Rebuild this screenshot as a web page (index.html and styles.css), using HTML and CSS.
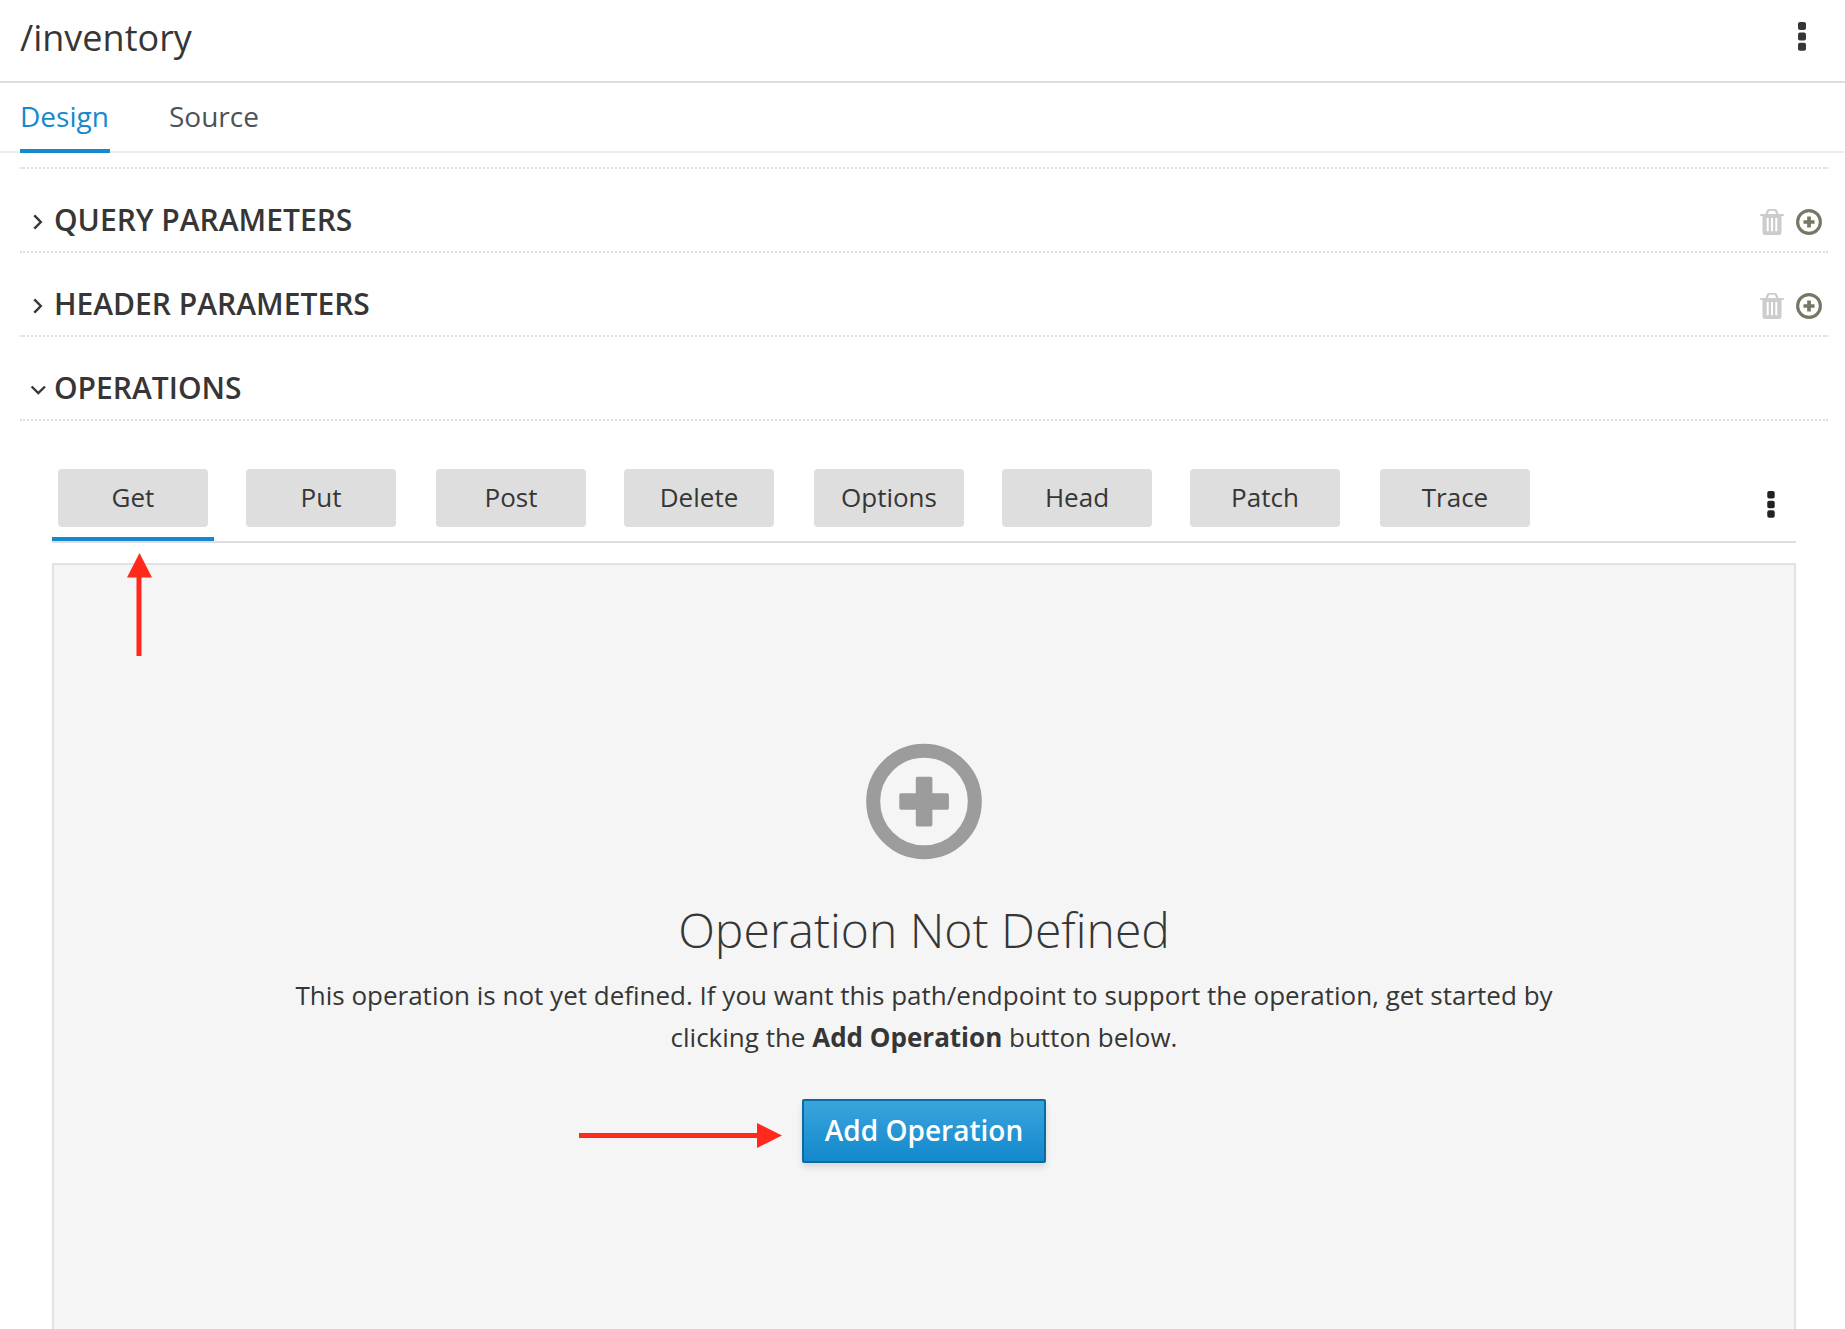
FILE: index.html
```html
<!DOCTYPE html>
<html lang="en">
<head>
<meta charset="utf-8">
<title>/inventory</title>
<link rel="stylesheet" href="styles.css">
</head>
<body>
<svg class="defs" width="0" height="0" aria-hidden="true">
  <symbol id="trash" viewBox="0 0 24 26">
    <path fill-rule="evenodd" d="M9 0h6q1.500 0 2 1.300L18.500 5H23q1 0 1 1t-1 1h-1.500v16q0 3-2.500 3H5q-2.500 0-2.500-3V7H1Q0 7 0 6t1-1h4.500L7 1.300Q7.500 0 9 0zM9.300 1.700L7.700 5h8.600l-1.600-3.300zM6.700 9v13.300h2V9zM11 9v13.300h2V9zM15.300 9v13.300h2V9z"/>
  </symbol>
  <symbol id="add" viewBox="0 0 116 116">
    <circle cx="58" cy="58" r="50.800" fill="none" stroke="currentColor" stroke-width="14"/>
    <path d="M51.500 33.300h13.200q1.700 0 1.700 1.700v14.700H81.200q1.700 0 1.700 1.700v13.200q0 1.700-1.700 1.700H66.400V81.200q0 1.700-1.700 1.700H51.500q-1.700 0-1.700-1.700V66.300H35q-1.700 0-1.700-1.700V51.400q0-1.700 1.700-1.700h14.800V35q0-1.700 1.700-1.700z"/>
  </symbol>
  <symbol id="kebab" viewBox="0 0 8 29">
    <rect width="8" height="8" rx="2"/><rect y="10.400" width="8" height="8" rx="2"/><rect y="20.700" width="8" height="8" rx="2"/>
  </symbol>
</svg>

<header class="page-header">
  <h1 class="path-name">/inventory</h1>
  <svg class="kebab"><use href="#kebab"/></svg>
</header>

<nav class="tabs">
  <a class="tab tab-active">Design</a>
  <a class="tab">Source</a>
</nav>

<main class="editor">
  <section class="section-row">
    <svg class="chevron" viewBox="0 0 16 16"><path d="M4.300 1.300L10.800 8l-6.500 6.700"/></svg>
    <h2 class="section-title">QUERY PARAMETERS</h2>
    <svg class="trash"><use href="#trash"/></svg>
    <svg class="add"><use href="#add"/></svg>
  </section>
  <section class="section-row">
    <svg class="chevron" viewBox="0 0 16 16"><path d="M4.300 1.300L10.800 8l-6.500 6.700"/></svg>
    <h2 class="section-title">HEADER PARAMETERS</h2>
    <svg class="trash"><use href="#trash"/></svg>
    <svg class="add"><use href="#add"/></svg>
  </section>
  <section class="section-row">
    <svg class="chevron" viewBox="0 0 16 16"><path d="M1.600 4.500L8.300 11l6.700-6.500"/></svg>
    <h2 class="section-title">OPERATIONS</h2>
  </section>

  <div class="operations">
    <div class="op-tabs">
      <div class="op-tab op-active"><button class="op">Get</button></div>
      <div class="op-tab"><button class="op">Put</button></div>
      <div class="op-tab op-wide"><button class="op">Post</button></div>
      <div class="op-tab"><button class="op">Delete</button></div>
      <div class="op-tab op-wide"><button class="op">Options</button></div>
      <div class="op-tab"><button class="op">Head</button></div>
      <div class="op-tab"><button class="op">Patch</button></div>
      <div class="op-tab op-wide"><button class="op">Trace</button></div>
      <svg class="op-kebab"><use href="#kebab"/></svg>
    </div>
    <div class="blank">
      <svg class="blank-icon"><use href="#add"/></svg>
      <h3 class="blank-title">Operation Not Defined</h3>
      <p class="blank-text">This operation is not yet defined. If you want this path/endpoint to support the operation, get started by clicking the <strong>Add Operation</strong> button below.</p>
      <button class="primary">Add Operation</button>
    </div>
  </div>
</main>

<svg class="arrow arrow-up" viewBox="0 0 25 103"><path d="M12.500 0L25 24.500H14.500V103h-5V24.500H0z"/></svg>
<svg class="arrow arrow-right" viewBox="0 0 203 25"><path d="M203 12.500L178 25V15H0v-5h178V0z"/></svg>
</body>
</html>
```
FILE: styles.css
```css
* { box-sizing: border-box; }
body {
  margin: 0;
  height: 1329px;
  overflow: hidden;
  position: relative;
  display: flex;
  flex-direction: column;
  background: #fff;
  color: #363636;
  font-family: "Open Sans", sans-serif;
}
h1, h2, h3, p { margin: 0; }
button { font-family: inherit; color: inherit; padding: 0; }
svg { display: block; flex: none; fill: currentColor; }
.defs { position: absolute; }

.page-header {
  flex: none;
  display: flex;
  justify-content: space-between;
  height: 83px;
  padding: 0 39px 0 20px;
  border-bottom: 2px solid #ddd;
}
.path-name { font-size: 36px; font-weight: 400; line-height: 76px; }
.kebab { width: 8px; height: 29px; margin-top: 22px; }

.tabs {
  flex: none;
  display: flex;
  gap: 59px;
  height: 70px;
  padding-left: 20px;
  border-bottom: 2px solid #ededed;
}
.tab { height: 70px; font-size: 28px; line-height: 66px; color: #4d5258; }
.tab-active { width: 90px; color: #1689ce; border-bottom: 4px solid #1689ce; }

.editor { flex: 1; min-height: 0; display: flex; flex-direction: column; margin: 14px 17px 0 20px; border-top: 2px dotted #ddd; }
.section-row {
  flex: none;
  display: flex;
  align-items: center;
  height: 84px;
  padding: 20px 6px 0 10px;
  border-bottom: 2px dotted #ddd;
}
.chevron { width: 16px; height: 16px; margin-top: 4px; fill: none; stroke: currentColor; stroke-width: 2.400; }
.section-title { flex: 1; margin-left: 8px; font-size: 30px; font-weight: 600; line-height: 60px; }
.trash { width: 24px; height: 26px; margin-top: 3px; color: #ccc; }
.add { width: 26px; height: 26px; margin: 3px 0 0 12px; color: #767865; }

.operations { flex: 1; min-height: 0; display: flex; flex-direction: column; padding: 48px 32px 0; }
.op-tabs { flex: none; display: flex; height: 74px; gap: 26px; border-bottom: 2px solid #ddd; }
.op-tab { width: 162px; height: 72px; padding-left: 6px; }
.op-wide { margin-left: 2px; }
.op-active { border-bottom: 4px solid #1689ce; }
.op { display: block; width: 150px; height: 58px; border: 0; border-radius: 4px; background: #dedede; font-size: 26px; line-height: 56px; padding-bottom: 2px; }
.op-kebab { width: 8px; height: 27px; margin: 22px 21px 0 auto; color: #222; }

.blank {
  flex: 1;
  min-height: 0;
  display: flex;
  flex-direction: column;
  align-items: center;
  margin-top: 20px;
  padding-top: 178px;
  border: 2px solid #e2e2e2;
  border-bottom: 0;
  border-radius: 2px 2px 0 0;
  background: #f5f5f5;
}
.blank-icon { width: 116px; height: 117px; color: #9c9c9c; }
.blank-title { margin-top: 42px; font-size: 48px; font-weight: 300; line-height: 56px; }
.blank-text { width: 1300px; margin-top: 16px; font-size: 26px; line-height: 42px; text-align: center; }
.primary {
  width: 244px;
  height: 64px;
  margin-top: 41px;
  padding-bottom: 2px;
  border: 2px solid #0a6aa1;
  border-radius: 2px;
  background: linear-gradient(#39a5dc, #1388cd);
  box-shadow: 0 4px 6px rgba(3, 3, 3, .12);
  color: #fff;
  font-size: 28px;
  font-weight: 600;
  line-height: 58px;
}

.arrow { position: absolute; color: #ff2a1b; }
.arrow-up { left: 127px; top: 553px; width: 25px; height: 103px; }
.arrow-right { left: 579px; top: 1123px; width: 203px; height: 25px; }
```
